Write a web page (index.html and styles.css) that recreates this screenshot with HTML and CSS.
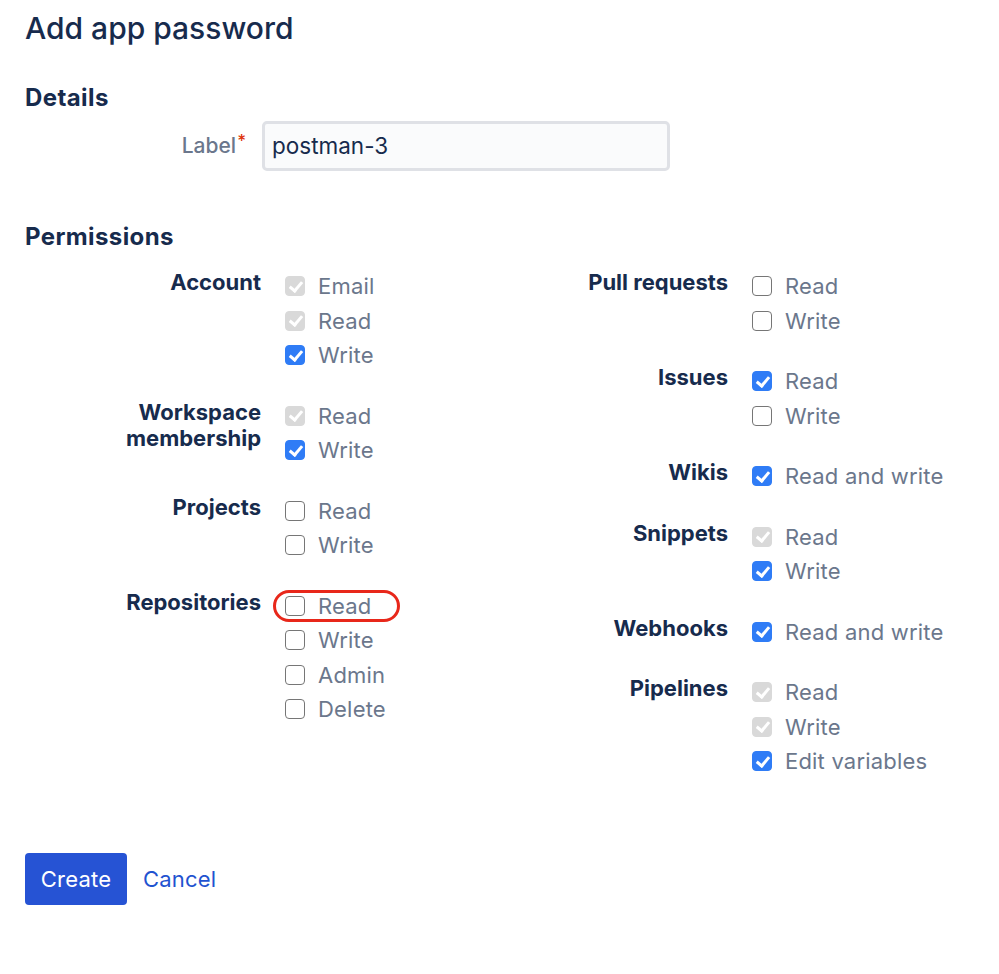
FILE: index.html
```html
<!DOCTYPE html>
<html>
<head>
<meta charset="utf-8">
<link rel="stylesheet" href="styles.css">
</head>
<body>
<div class="page">
  <h1 class="title">Add app password</h1>
  <h2 class="section">Details</h2>
  <div class="field">
    <label class="field-label">Label<span class="req">*</span></label>
    <div class="input">postman-3</div>
  </div>

  <h2 class="section perm-head">Permissions</h2>
  <div class="perms">
    <div class="col">
      <div class="group">
        <div class="g-label">Account</div>
        <div class="opts">
          <div class="opt"><span class="cb dis"></span>Email</div>
          <div class="opt"><span class="cb dis"></span>Read</div>
          <div class="opt"><span class="cb on"></span>Write</div>
        </div>
      </div>
      <div class="group">
        <div class="g-label">Workspace membership</div>
        <div class="opts">
          <div class="opt"><span class="cb dis"></span>Read</div>
          <div class="opt"><span class="cb on"></span>Write</div>
        </div>
      </div>
      <div class="group">
        <div class="g-label">Projects</div>
        <div class="opts">
          <div class="opt"><span class="cb"></span>Read</div>
          <div class="opt"><span class="cb"></span>Write</div>
        </div>
      </div>
      <div class="group">
        <div class="g-label">Repositories</div>
        <div class="opts">
          <div class="opt marked"><span class="cb"></span>Read<span class="ring"></span></div>
          <div class="opt"><span class="cb"></span>Write</div>
          <div class="opt"><span class="cb"></span>Admin</div>
          <div class="opt"><span class="cb"></span>Delete</div>
        </div>
      </div>
    </div>
    <div class="col">
      <div class="group">
        <div class="g-label">Pull requests</div>
        <div class="opts">
          <div class="opt"><span class="cb"></span>Read</div>
          <div class="opt"><span class="cb"></span>Write</div>
        </div>
      </div>
      <div class="group">
        <div class="g-label">Issues</div>
        <div class="opts">
          <div class="opt"><span class="cb on"></span>Read</div>
          <div class="opt"><span class="cb"></span>Write</div>
        </div>
      </div>
      <div class="group">
        <div class="g-label">Wikis</div>
        <div class="opts">
          <div class="opt"><span class="cb on"></span>Read and write</div>
        </div>
      </div>
      <div class="group">
        <div class="g-label">Snippets</div>
        <div class="opts">
          <div class="opt"><span class="cb dis"></span>Read</div>
          <div class="opt"><span class="cb on"></span>Write</div>
        </div>
      </div>
      <div class="group">
        <div class="g-label">Webhooks</div>
        <div class="opts">
          <div class="opt"><span class="cb on"></span>Read and write</div>
        </div>
      </div>
      <div class="group">
        <div class="g-label">Pipelines</div>
        <div class="opts">
          <div class="opt"><span class="cb dis"></span>Read</div>
          <div class="opt"><span class="cb dis"></span>Write</div>
          <div class="opt"><span class="cb on"></span>Edit variables</div>
        </div>
      </div>
    </div>
  </div>

  <div class="actions">
    <button class="btn">Create</button>
    <a class="cancel">Cancel</a>
  </div>
</div>
</body>
</html>
```

FILE: styles.css
```css
* { box-sizing: border-box; }
html, body { margin: 0; padding: 0; background: #fff; }
body {
  font-family: Inter, "Noto Sans", "Liberation Sans", sans-serif;
  color: #172B4D;
  width: 999px;
  height: 974px;
  overflow: hidden;
}
.page { padding: 0 25px; }

.title {
  margin: 0;
  padding-top: 8px;
  font-size: 30px;
  font-weight: 500;
  line-height: 40px;
  letter-spacing: 0;
}
.section {
  margin: 0;
  margin-top: 35px;
  font-size: 24px;
  font-weight: 700;
  line-height: 30px;
  letter-spacing: 0.4px;
}
.field {
  display: flex;
  align-items: center;
  margin-top: 8px;
}
.field-label {
  width: 237px;
  padding-right: 16px;
  text-align: right;
  font-size: 21px;
  font-weight: 500;
  color: #6B778C;
  padding-bottom: 4px;
}
.req {
  color: #DE350B;
  font-size: 17px;
  vertical-align: 6px;
  margin-left: 1px;
}
.input {
  width: 408px;
  height: 50px;
  border: 3px solid #DFE1E6;
  border-radius: 5px;
  background: #FAFBFC;
  font-size: 22.5px;
  line-height: 44px;
  padding-left: 7px;
  color: #172B4D;
}
.perm-head { margin-top: 51px; }

.perms {
  display: grid;
  grid-template-columns: 467px 467px;
  margin-top: 17px;
}
.col { display: flex; flex-direction: column; gap: 26px; }
.group {
  display: grid;
  grid-template-columns: 236px 1fr;
  column-gap: 24px;
}
.g-label {
  text-align: right;
  font-size: 22px;
  font-weight: 700;
  line-height: 26px;
  padding-left: 80px;
  letter-spacing: 0;
}
.opts { display: flex; flex-direction: column; }
.opt {
  position: relative;
  display: flex;
  align-items: center;
  height: 34.5px;
  font-size: 22px;
  letter-spacing: 0.2px;
  color: #6B778C;
}
.cb {
  flex: none;
  width: 20px;
  height: 20px;
  border: 1.5px solid #767676;
  border-radius: 4px;
  background: #fff;
  margin-right: 13px;
  position: relative;
}
.cb.on { background: #2F7CF6; border-color: #2F7CF6; }
.cb.dis { background: #D9D9D9; border-color: #D9D9D9; }
.cb.on::after, .cb.dis::after {
  content: "";
  position: absolute;
  left: 5.5px;
  top: 1.5px;
  width: 5px;
  height: 10px;
  border: solid #fff;
  border-width: 0 3px 3px 0;
  transform: rotate(40deg);
}
.ring {
  position: absolute;
  left: -12px;
  top: 1px;
  width: 127px;
  height: 32px;
  border: 3px solid #E8271A;
  border-radius: 17px;
}

.actions {
  display: flex;
  align-items: center;
  margin-top: 74px;
}
.btn {
  font-family: inherit;
  width: 102px;
  height: 52px;
  border: 0;
  border-radius: 4px;
  background: #2653D4;
  color: #fff;
  font-size: 22px;
  letter-spacing: 0.2px;
}
.cancel {
  margin-left: 16px;
  font-size: 22px;
  letter-spacing: 0.2px;
  color: #1F53D0;
}
```
